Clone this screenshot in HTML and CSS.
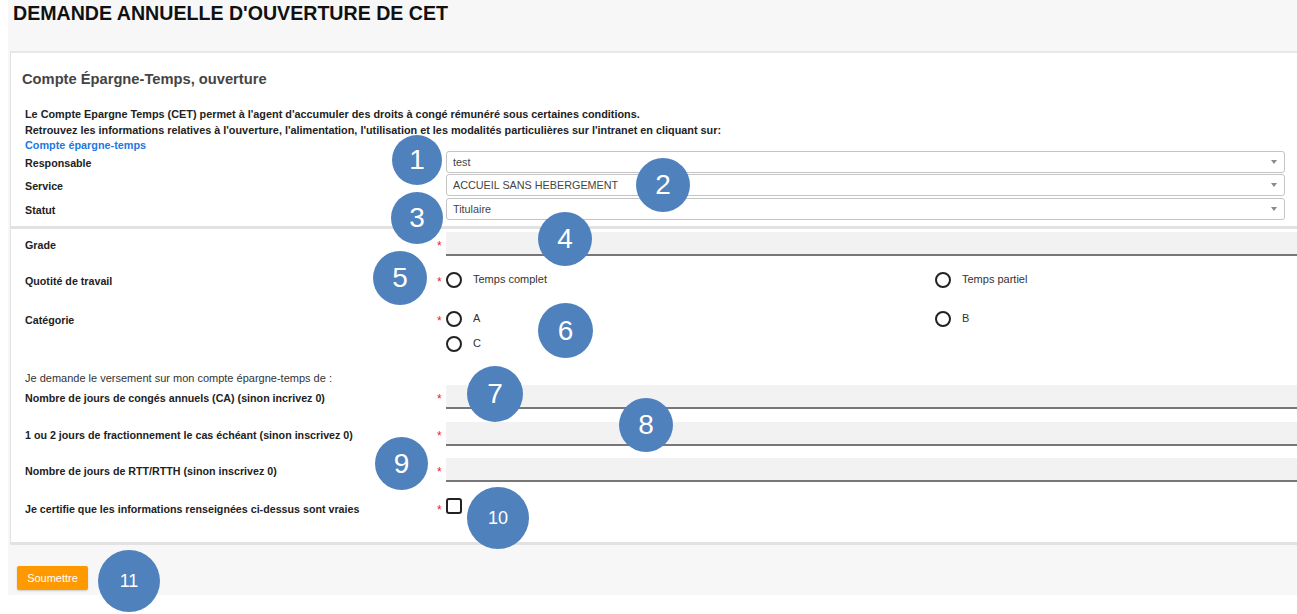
FILE: index.html
```html
<!DOCTYPE html>
<html lang="fr">
<head>
<meta charset="utf-8">
<title>Demande annuelle d'ouverture de CET</title>
<link rel="stylesheet" href="styles.css">
</head>
<body>
<div class="page">
  <h1 class="page-title">DEMANDE ANNUELLE D'OUVERTURE DE CET</h1>

  <section class="panel panel-intro">
    <h2 class="panel-heading">Compte Épargne-Temps, ouverture</h2>
    <div class="intro">
      <p>Le Compte Epargne Temps (CET) permet à l'agent d'accumuler des droits à congé rémunéré sous certaines conditions.</p>
      <p>Retrouvez les informations relatives à l'ouverture, l'alimentation, l'utilisation et les modalités particulières sur l'intranet en cliquant sur:</p>
      <a class="intro-link" href="#">Compte épargne-temps</a>
    </div>
    <div class="select-rows">
      <div class="field-row">
        <span class="field-label">Responsable</span><span class="req-cell"></span>
        <div class="select"><span>test</span><i class="caret"></i></div>
      </div>
      <div class="field-row">
        <span class="field-label">Service</span><span class="req-cell"></span>
        <div class="select"><span>ACCUEIL SANS HEBERGEMENT</span><i class="caret"></i></div>
      </div>
      <div class="field-row">
        <span class="field-label">Statut</span><span class="req-cell"></span>
        <div class="select"><span>Titulaire</span><i class="caret"></i></div>
      </div>
    </div>
  </section>

  <section class="panel panel-form">
    <div class="field-row row-grade">
      <span class="field-label">Grade</span><span class="req-cell"><span class="req">*</span></span>
      <input class="text-input" type="text">
    </div>

    <div class="field-row field-row--options row-quotite">
      <span class="field-label">Quotité de travail</span><span class="req-cell"><span class="req">*</span></span>
      <div class="options">
        <label class="option"><input class="radio" type="radio" name="quotite"><span>Temps complet</span></label>
        <label class="option"><input class="radio" type="radio" name="quotite"><span>Temps partiel</span></label>
      </div>
    </div>

    <div class="field-row field-row--options row-categorie">
      <span class="field-label label-cat">Catégorie</span><span class="req-cell"><span class="req">*</span></span>
      <div class="options">
        <label class="option"><input class="radio" type="radio" name="cat"><span>A</span></label>
        <label class="option"><input class="radio" type="radio" name="cat"><span>B</span></label>
        <label class="option"><input class="radio" type="radio" name="cat"><span>C</span></label>
      </div>
    </div>

    <p class="versement">Je demande le versement sur mon compte épargne-temps de :</p>

    <div class="field-row row-ca">
      <span class="field-label">Nombre de jours de congés annuels (CA) (sinon incrivez 0)</span><span class="req-cell"><span class="req">*</span></span>
      <input class="text-input" type="text">
    </div>
    <div class="field-row row-frac">
      <span class="field-label">1 ou 2 jours de fractionnement le cas échéant (sinon inscrivez 0)</span><span class="req-cell"><span class="req">*</span></span>
      <input class="text-input" type="text">
    </div>
    <div class="field-row row-rtt">
      <span class="field-label">Nombre de jours de RTT/RTTH (sinon inscrivez 0)</span><span class="req-cell"><span class="req">*</span></span>
      <input class="text-input" type="text">
    </div>
    <div class="field-row field-row--check row-certif">
      <span class="field-label label-certif">Je certifie que les informations renseignées ci-dessus sont vraies</span><span class="req-cell"><span class="req">*</span></span>
      <div><input class="checkbox" type="checkbox"></div>
    </div>
  </section>

  <div class="actions">
    <button class="btn-submit" type="button">Soumettre</button>
  </div>
</div>

<div class="markers">
  <span class="marker m1">1</span>
  <span class="marker m2">2</span>
  <span class="marker m3">3</span>
  <span class="marker m4">4</span>
  <span class="marker m5">5</span>
  <span class="marker m6">6</span>
  <span class="marker m7">7</span>
  <span class="marker m8">8</span>
  <span class="marker m9">9</span>
  <span class="marker marker--small m10">10</span>
  <span class="marker marker--small m11">11</span>
</div>
</body>
</html>
```
FILE: styles.css
```css
html, body {
  margin: 0;
  padding: 0;
  overflow: hidden;
  background: #ffffff;
}

body {
  font-family: "Liberation Sans", Arial, sans-serif;
  color: #222;
  position: relative;
  height: 614px;
}

.page {
  margin-left: 8px;
  background: #f7f7f7;
  height: 595px;
  display: flex;
  flex-direction: column;
}

.page-title {
  margin: 0;
  padding: 2px 0 0 5px;
  height: 51px;
  box-sizing: border-box;
  font-size: 19.6px;
  line-height: 22px;
  font-weight: bold;
  color: #111;
  flex-shrink: 0;
}

.panel {
  background: #fff;
  margin-left: 2px;
  margin-right: -10px;
  border-left: 1px solid #e2e2e2;
  padding-left: 14px;
  flex-shrink: 0;
}

.panel-intro {
  border-top: 2px solid #e8e8e8;
  border-bottom: 3px solid #e2e2e2;
  padding-top: 17px;
  padding-right: 22px;
  padding-bottom: 6px;
}

.panel-heading {
  margin: 0 0 0 -3px;
  font-size: 14.7px;
  line-height: 18px;
  font-weight: bold;
  color: #444;
}

.intro {
  margin-top: 19px;
  font-size: 10.85px;
  line-height: 15.5px;
  font-weight: bold;
  color: #222;
}

.intro p {
  margin: 0;
}

.intro-link {
  display: block;
  color: #1f78e0;
  text-decoration: none;
  font-weight: bold;
}

.select-rows {
  display: flex;
  flex-direction: column;
  gap: 1.5px;
  margin-top: -3px;
}

.field-row {
  display: grid;
  grid-template-columns: 410px 11px 1fr;
  align-items: center;
}

.field-label {
  font-size: 10.7px;
  font-weight: bold;
  color: #222;
  line-height: 14px;
  padding-top: 2px;
}

.req-cell {
  display: flex;
  align-items: center;
  align-self: stretch;
}

.req {
  color: #ee1c25;
  font-size: 12px;
  line-height: 12px;
  padding-top: 4px;
  padding-left: 2px;
}

.select {
  height: 22px;
  box-sizing: border-box;
  border: 1px solid #c4c4c4;
  border-radius: 3px;
  display: flex;
  align-items: center;
  justify-content: space-between;
  padding: 0 7px 0 6px;
  font-size: 10.8px;
  color: #444;
  background: #fff;
}

.caret {
  width: 0;
  height: 0;
  border-left: 3px solid transparent;
  border-right: 3px solid transparent;
  border-top: 4px solid #8a8a8a;
}

.panel-form {
  border-bottom: 3px solid #e2e2e2;
  padding-top: 3px;
  padding-bottom: 26px;
}

.text-input {
  display: block;
  width: 100%;
  height: 24px;
  box-sizing: border-box;
  margin: 0;
  border: 0;
  border-bottom: 2px solid #777;
  background: #f2f2f2;
  outline: none;
  font: inherit;
}

.field-row--options {
  align-items: start;
}

.field-row--options .field-label {
  line-height: 16px;
  padding-top: 1px;
}

.field-row--options .req-cell {
  height: 16px;
}

.row-quotite { margin-top: 16px; }
.row-categorie { margin-top: 22px; }
.label-cat { padding-top: 3px; }

.options {
  display: grid;
  grid-template-columns: 489px 1fr;
  row-gap: 9px;
}

.option {
  display: flex;
  align-items: center;
  gap: 11px;
  font-size: 11px;
  color: #333;
  line-height: 16px;
}

.option span {
  margin-top: -2px;
}

.radio {
  appearance: none;
  -webkit-appearance: none;
  margin: 0;
  width: 16px;
  height: 16px;
  box-sizing: border-box;
  border: 2px solid #222;
  border-radius: 50%;
  background: #fff;
}

.versement {
  margin: 19px 0 0;
  font-size: 11px;
  line-height: 14px;
  color: #333;
}

.row-frac { margin-top: 13px; }
.row-rtt { margin-top: 12px; }
.row-certif { margin-top: 16px; }

.field-row--check {
  align-items: start;
}

.field-row--check .req-cell {
  height: 16px;
  padding-top: 2px;
}

.label-certif {
  padding-top: 4px;
}

.checkbox {
  appearance: none;
  -webkit-appearance: none;
  display: block;
  margin: 0;
  width: 16px;
  height: 16px;
  box-sizing: border-box;
  border: 2px solid #222;
  border-radius: 3px;
  background: #fff;
}

.actions {
  padding: 21px 0 0 9px;
}

.btn-submit {
  width: 71px;
  height: 24px;
  border: 0;
  border-radius: 2px;
  background: #ff9900;
  color: #fff;
  font-family: "Liberation Sans", Arial, sans-serif;
  font-size: 11px;
  padding: 0;
  box-shadow: 0 1px 2px rgba(0, 0, 0, 0.18);
}

.markers {
  position: absolute;
  left: 0;
  top: 0;
  width: 0;
  height: 0;
}

.marker {
  position: absolute;
  display: flex;
  align-items: center;
  justify-content: center;
  border-radius: 50%;
  background: #4f81bd;
  color: #fff;
  font-family: "Liberation Sans", Arial, sans-serif;
  font-size: 28px;
  width: 54px;
  height: 54px;
}

.marker--small {
  font-size: 18px;
  width: 62px;
  height: 62px;
}

.m1 { left: 392px; top: 135px; width: 50px; height: 50px; }
.m2 { left: 636px; top: 158px; }
.m3 { left: 391px; top: 192px; width: 52px; height: 52px; }
.m4 { left: 538px; top: 212px; }
.m5 { left: 373px; top: 251px; }
.m6 { left: 538px; top: 303px; width: 55px; height: 55px; }
.m7 { left: 467px; top: 366px; width: 56px; height: 56px; }
.m8 { left: 619px; top: 398px; }
.m9 { left: 375px; top: 437px; width: 53px; height: 53px; }
.m10 { left: 467px; top: 487px; }
.m11 { left: 98px; top: 550px; }
```
